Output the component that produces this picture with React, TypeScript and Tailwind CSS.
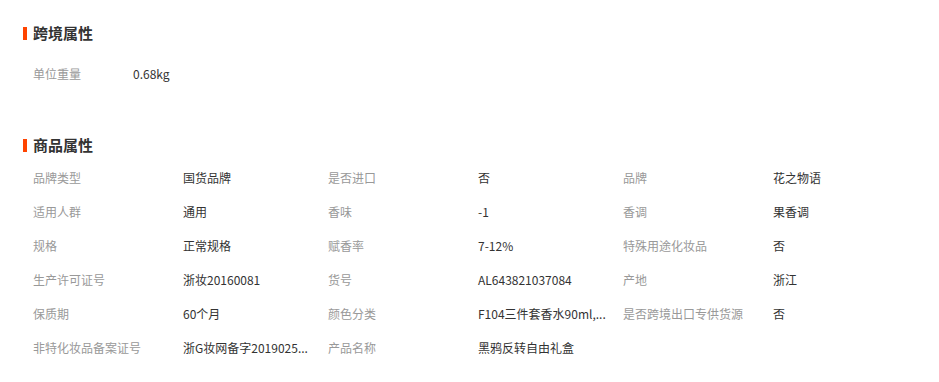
const goods: [string, string][] = [
  ['品牌类型', '国货品牌'],
  ['是否进口', '否'],
  ['品牌', '花之物语'],
  ['适用人群', '通用'],
  ['香味', '-1'],
  ['香调', '果香调'],
  ['规格', '正常规格'],
  ['赋香率', '7-12%'],
  ['特殊用途化妆品', '否'],
  ['生产许可证号', '浙妆20160081'],
  ['货号', 'AL643821037084'],
  ['产地', '浙江'],
  ['保质期', '60个月'],
  ['颜色分类', 'F104三件套香水90ml,...'],
  ['是否跨境出口专供货源', '否'],
  ['非特化妆品备案证号', '浙G妆网备字2019025...'],
  ['产品名称', '黑鸦反转自由礼盒'],
];

function SectionTitle({ title }: { title: string }) {
  return (
    <div className="flex h-5 items-center">
      <span className="mr-[6px] h-[13px] w-[4px] bg-[#ff4400]" />
      <h3 className="text-[15px] font-bold leading-5 text-[#333]">{title}</h3>
    </div>
  );
}

function Attr({ label, value }: { label: string; value: string }) {
  return (
    <div className="flex h-[34px] w-[295px] items-center text-[12px]">
      <span className="w-[150px] shrink-0 whitespace-nowrap text-[#999]">{label}</span>
      <span className="whitespace-nowrap text-[#333]">{value}</span>
    </div>
  );
}

export default function App() {
  return (
    <div
      className="min-h-[382px] w-[939px] bg-white pl-[23px] pt-[23px]"
      style={{ fontFamily: '"Noto Sans CJK SC", "Noto Sans", sans-serif' }}
    >
      <SectionTitle title="跨境属性" />
      <div className="mt-[14px] pl-[10px]">
        <div className="flex h-[34px] items-center text-[12px]">
          <span className="w-[100px] text-[#999]">单位重量</span>
          <span className="text-[#333]">0.68kg</span>
        </div>
      </div>

      <div className="mt-[44px]">
        <SectionTitle title="商品属性" />
      </div>
      <div className="mt-[6px] flex w-[895px] flex-wrap pl-[10px]">
        {goods.map(([label, value]) => (
          <Attr key={label} label={label} value={value} />
        ))}
      </div>
    </div>
  );
}
